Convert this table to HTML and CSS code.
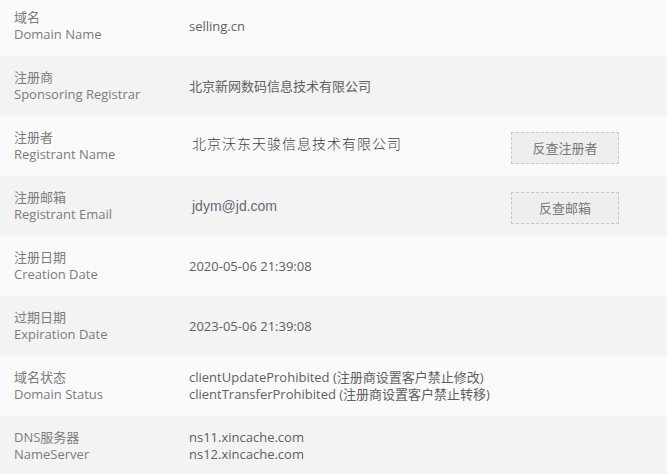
FILE: index.html
```html
<!DOCTYPE html>
<html lang="zh-CN">
<head>
    <meta charset="UTF-8">
    <title>域名信息</title>
    <link rel="stylesheet" href="styles.css">
</head>
<body>
    <div class="info">
        <div class="row odd">
            <div class="label">域名<br>Domain Name</div>
            <div class="value">selling.cn</div>
        </div>
        <div class="row">
            <div class="label">注册商<br>Sponsoring Registrar</div>
            <div class="value">北京新网数码信息技术有限公司</div>
        </div>
        <div class="row odd">
            <div class="label">注册者<br>Registrant Name</div>
            <div class="value song">北京沃东天骏信息技术有限公司</div>
            <a class="btn" href="#">反查注册者</a>
        </div>
        <div class="row">
            <div class="label">注册邮箱<br>Registrant Email</div>
            <div class="value mail">jdym@jd.com</div>
            <a class="btn" href="#">反查邮箱</a>
        </div>
        <div class="row odd">
            <div class="label">注册日期<br>Creation Date</div>
            <div class="value">2020-05-06 21:39:08</div>
        </div>
        <div class="row">
            <div class="label">过期日期<br>Expiration Date</div>
            <div class="value">2023-05-06 21:39:08</div>
        </div>
        <div class="row odd">
            <div class="label">域名状态<br>Domain Status</div>
            <div class="value">clientUpdateProhibited (注册商设置客户禁止修改)<br>clientTransferProhibited (注册商设置客户禁止转移)</div>
        </div>
        <div class="row">
            <div class="label">DNS服务器<br>NameServer</div>
            <div class="value">ns11.xincache.com<br>ns12.xincache.com</div>
        </div>
    </div>
</body>
</html>
```

FILE: styles.css
```css
body {
    margin: 0;
    background-color: #f3f3f3;
    font-family: "Open Sans", "Noto Sans CJK SC", sans-serif;
    font-size: 13px;
    color: #666;
}
.info {
    margin-top: -4px;
}
.row {
    display: flex;
    align-items: center;
    height: 60px;
    background-color: #f3f3f3;
}
.row.odd {
    background-color: #fafafa;
}
.label {
    width: 175px;
    padding-left: 14px;
    line-height: 17px;
    color: #7c7c7c;
}
.value {
    flex: 1;
    line-height: 17px;
    color: #606060;
}
.value.song {
    padding-left: 3px;
    font-family: "Noto Sans CJK SC", sans-serif;
    font-size: 14px;
    font-weight: 300;
    letter-spacing: 1px;
    color: #3e3e3e;
    margin-top: -5px;
}
.value.mail {
    padding-left: 3px;
    font-family: "Liberation Sans", sans-serif;
    font-size: 14px;
    color: #656a76;
}
.btn {
    width: 106px;
    height: 30px;
    line-height: 30px;
    margin-right: 48px;
    margin-top: 4px;
    text-align: center;
    background-color: #eeeeee;
    border: 1px dashed #c8c8c8;
    color: #777;
    text-decoration: none;
    font-size: 13px;
}
```
